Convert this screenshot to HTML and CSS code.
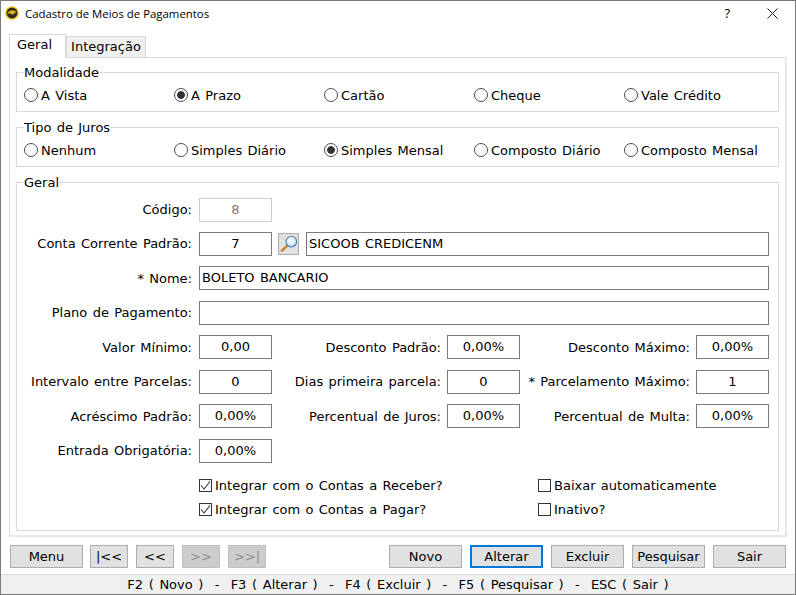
FILE: index.html
```html
<!DOCTYPE html>
<html>
  <head>
    <title>Cadastro de Meios de Pagamentos</title>
    <link rel="stylesheet" href="styles.css">
  </head>
<body>
  <main class="window">
    <header class="titlebar">
      <svg class="logo" width="14" height="14" viewBox="0 0 16 16">
        <circle cx="8" cy="8" r="7.8" fill="#f2c21a"/>
        <circle cx="8" cy="8" r="6.2" fill="#2b2a22"/>
        <path d="M2.5 8.5 C4 6 6.5 4.8 9 5 L13 5.6 L11 7 L13.5 8 L10 8.6 L8.5 10.5 L7.5 9 C6 8.6 4 8.4 2.5 8.5 Z" fill="#e3b41c"/>
      </svg>
      <span class="title">Cadastro de Meios de Pagamentos</span>
      <span class="help">?</span>
      <svg class="close" width="11" height="11" viewBox="0 0 11 11">
        <path d="M0.5 0.5 L10.5 10.5 M10.5 0.5 L0.5 10.5" stroke="#1a1a1a" stroke-width="1" fill="none"/>
      </svg>
    </header>

    <nav class="tabs">
      <span class="tab active">Geral</span>
      <span class="tab">Integração</span>
    </nav>

    <section class="pane">
      <fieldset class="group">
        <legend>Modalidade</legend>
        <div class="options">
          <label class="option"><input type="radio" name="modalidade">A Vista</label>
          <label class="option"><input type="radio" name="modalidade" checked>A Prazo</label>
          <label class="option"><input type="radio" name="modalidade">Cartão</label>
          <label class="option"><input type="radio" name="modalidade">Cheque</label>
          <label class="option"><input type="radio" name="modalidade">Vale Crédito</label>
        </div>
      </fieldset>

      <fieldset class="group">
        <legend>Tipo de Juros</legend>
        <div class="options">
          <label class="option"><input type="radio" name="juros">Nenhum</label>
          <label class="option"><input type="radio" name="juros">Simples Diário</label>
          <label class="option"><input type="radio" name="juros" checked>Simples Mensal</label>
          <label class="option"><input type="radio" name="juros">Composto Diário</label>
          <label class="option"><input type="radio" name="juros">Composto Mensal</label>
        </div>
      </fieldset>

      <fieldset class="group main-group">
        <legend>Geral</legend>

        <div class="row">
          <label>Código:</label>
          <input class="field center disabled" type="text" value="8" disabled>
        </div>

        <div class="row r2">
          <label>Conta Corrente Padrão:</label>
          <input class="field center" type="text" value="7">
          <span class="lookup">
            <svg width="20" height="20" viewBox="0 0 20 20">
              <defs>
                <radialGradient id="lens" cx="0.45" cy="0.4" r="0.7">
                  <stop offset="0" stop-color="#ffffff"/>
                  <stop offset="0.6" stop-color="#d5e8f7"/>
                  <stop offset="1" stop-color="#5da3dc"/>
                </radialGradient>
              </defs>
              <path d="M8.5 12 L3 17" stroke="#c9822c" stroke-width="2.6" stroke-linecap="round"/>
              <circle cx="13" cy="7.5" r="5.6" fill="url(#lens)" stroke="#4a7fa8" stroke-width="1.1"/>
            </svg>
          </span>
          <input class="field" type="text" value="SICOOB CREDICENM">
        </div>

        <div class="row r3">
          <label>* Nome:</label>
          <input class="field" type="text" value="BOLETO BANCARIO">
        </div>

        <div class="row r3">
          <label>Plano de Pagamento:</label>
          <input class="field" type="text" value="">
        </div>

        <div class="row">
          <label>Valor Mínimo:</label>
          <input class="field center" type="text" value="0,00">
          <label>Desconto Padrão:</label>
          <input class="field center" type="text" value="0,00%">
          <label>Desconto Máximo:</label>
          <input class="field center" type="text" value="0,00%">
        </div>

        <div class="row">
          <label>Intervalo entre Parcelas:</label>
          <input class="field center" type="text" value="0">
          <label>Dias primeira parcela:</label>
          <input class="field center" type="text" value="0">
          <label>* Parcelamento Máximo:</label>
          <input class="field center" type="text" value="1">
        </div>

        <div class="row">
          <label>Acréscimo Padrão:</label>
          <input class="field center" type="text" value="0,00%">
          <label>Percentual de Juros:</label>
          <input class="field center" type="text" value="0,00%">
          <label>Percentual de Multa:</label>
          <input class="field center" type="text" value="0,00%">
        </div>

        <div class="row">
          <label>Entrada Obrigatória:</label>
          <input class="field center" type="text" value="0,00%">
        </div>

        <div class="checks">
          <label class="check"><input type="checkbox" checked>Integrar com o Contas a Receber?</label>
          <label class="check"><input type="checkbox">Baixar automaticamente</label>
          <label class="check"><input type="checkbox" checked>Integrar com o Contas a Pagar?</label>
          <label class="check"><input type="checkbox">Inativo?</label>
        </div>
      </fieldset>
    </section>

    <div class="buttons">
      <button class="btn menu">Menu</button>
      <button class="btn small">|&lt;&lt;</button>
      <button class="btn small">&lt;&lt;</button>
      <button class="btn small off">&gt;&gt;</button>
      <button class="btn small off">&gt;&gt;|</button>
      <span class="spacer"></span>
      <button class="btn">Novo</button>
      <button class="btn focus">Alterar</button>
      <button class="btn">Excluir</button>
      <button class="btn">Pesquisar</button>
      <button class="btn">Sair</button>
    </div>

    <footer class="status">F2 ( Novo )&nbsp; - &nbsp;F3 ( Alterar )&nbsp; - &nbsp;F4 ( Excluir )&nbsp; - &nbsp;F5 ( Pesquisar )&nbsp; - &nbsp;ESC ( Sair )</footer>
  </main>
</body>
</html>
```

FILE: styles.css
```css
* {
  box-sizing: border-box;
}

html,
body {
  margin: 0;
  background: white;
}

body {
  font-family: "DejaVu Sans", sans-serif;
  font-size: 13px;
  word-spacing: 1.2px;
  color: #000;
}

.window {
  display: flex;
  flex-direction: column;
  width: 796px;
  height: 595px;
  border: 1px solid #7a7a7a;
  overflow: hidden;
}

.titlebar {
  display: flex;
  align-items: center;
  height: 26px;
  padding: 0 17px 2px 4px;
  flex: none;
}

.title {
  margin-left: 6px;
  font-family: "Open Sans", sans-serif;
  font-size: 11.4px;
  word-spacing: 0;
  flex: 1;
}

.help {
  font-family: "Open Sans", sans-serif;
  font-size: 13px;
  margin-right: 37px;
}

.logo,
.close {
  flex: none;
}

.tabs {
  display: flex;
  align-items: flex-end;
  height: 30px;
  padding: 0 0 0 8px;
  flex: none;
  position: relative;
  z-index: 1;
}

.tab {
  height: 21px;
  width: 80px;
  padding-top: 2px;
  text-align: center;
  background: #f0f0f0;
  border: 1px solid #d9d9d9;
  border-bottom: none;
}

.tab.active {
  width: 57px;
  height: 24px;
  padding: 2px 0 0 7px;
  text-align: left;
  background: white;
  margin-bottom: -1px;
}

.pane {
  width: 778px;
  height: 480px;
  margin-left: 8px;
  padding: 14px 6px 0 6px;
  border: 1px solid #d9d9d9;
  border-right: 2px solid #e8e8e8;
  border-bottom: 2px solid #e8e8e8;
  flex: none;
}

.group {
  position: relative;
  margin: 0 0 15px 0;
  padding: 0;
  height: 40px;
  border: 1px solid #d9d9d9;
}

.group legend {
  position: absolute;
  top: -8px;
  left: 7px;
  padding: 0;
  background: white;
  line-height: 16px;
}

.options {
  display: grid;
  grid-template-columns: repeat(5, 150px);
  padding: 14px 0 0 7px;
}

.option {
  display: flex;
  align-items: center;
  height: 16px;
  white-space: nowrap;
}

.option input {
  appearance: none;
  width: 14px;
  height: 14px;
  margin: 0 3px 0 0;
  border: 1px solid #4d4d4d;
  border-radius: 50%;
  background: white;
}

.option input:checked {
  background: radial-gradient(circle, #333 0 3.5px, white 4.2px);
}

.main-group {
  height: 349px;
  margin-bottom: 0;
  padding-top: 14.55px;
}

.row {
  display: grid;
  grid-template-columns: 182px 73px 175px 73px 176px 73px;
  align-items: center;
  height: 24px;
  margin-bottom: 10.43px;
}

.row label {
  padding-right: 7px;
  text-align: right;
  white-space: nowrap;
}

.row label:nth-of-type(n+2) {
  padding-right: 6px;
}

.row.r2 {
  grid-template-columns: 182px 73px 34px 1fr;
  padding-right: 9px;
}

.row.r3 {
  grid-template-columns: 182px 1fr;
  padding-right: 9px;
}

.field {
  width: 100%;
  height: 24px;
  padding: 0 2px 1px;
  border: 1px solid #7a7a7a;
  border-radius: 0;
  outline: none;
  background: white;
  color: #000;
  font: inherit;
  word-spacing: inherit;
}

.field.center {
  text-align: center;
}

.field.disabled {
  border-color: #ccc;
  color: #8a7468;
}

.lookup {
  display: flex;
  align-items: center;
  justify-content: center;
  width: 21px;
  height: 22px;
  margin-left: 6px;
  background: #e1e1e1;
  border: 1px solid #adadad;
}

.checks {
  display: grid;
  grid-template-columns: 339px 230px;
  grid-auto-rows: 24px;
  align-items: center;
  padding: 1px 0 0 182px;
}

.check {
  display: flex;
  align-items: center;
  white-space: nowrap;
}

.check input {
  appearance: none;
  width: 13px;
  height: 13px;
  margin: 0 3px 0 0;
  border: 1px solid #333;
  background: white;
}

.check input:checked {
  background: no-repeat center / 11px 11px url("data:image/svg+xml,%3Csvg xmlns='http://www.w3.org/2000/svg' viewBox='0 0 11 11'%3E%3Cpath d='M1 5.5 L4 9 L10 1.5' fill='none' stroke='%23333' stroke-width='1.1'/%3E%3C/svg%3E");
}

.buttons {
  display: flex;
  align-items: center;
  gap: 8px;
  height: 23px;
  margin: 8px 9px 0 9px;
  flex: none;
}

.spacer {
  flex: 1;
}

.btn {
  width: 73px;
  height: 23px;
  padding: 0;
  font: inherit;
  word-spacing: inherit;
  color: #000;
  background: #e1e1e1;
  border: 1px solid #adadad;
}

.btn.menu {
  margin-right: -1px;
}

.btn.small {
  width: 38px;
}

.btn.off {
  background: #cccccc;
  border-color: #bfbfbf;
  color: #8f8f8f;
}

.btn.focus {
  background: #e1e1e1;
  border: 2px solid #0078d7;
}

.status {
  flex: none;
  height: 20px;
  margin-top: 6px;
  line-height: 19px;
  text-align: center;
  word-spacing: 1.5px;
  background: #f0f0f0;
  border-top: 1px solid #dcdcdc;
  white-space: pre;
}
```
